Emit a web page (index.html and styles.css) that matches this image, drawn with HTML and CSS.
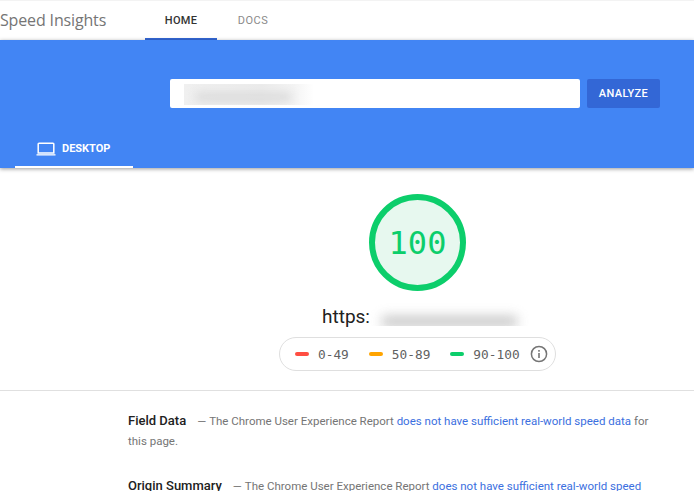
FILE: index.html
```html
<!DOCTYPE html>
<html lang="en">
<head>
  <meta charset="UTF-8" />
  <title>PageSpeed Insights</title>
  <link rel="stylesheet" href="styles.css">
</head>
<body>

<!-- Header -->
<header class="top-bar">
  <div class="brand">Speed Insights</div>
  <nav class="nav">
    <a class="nav-tab active">HOME</a>
    <a class="nav-tab">DOCS</a>
  </nav>
</header>

<!-- Search band -->
<section class="band">
  <div class="search-row">
    <div class="search-input">
      <div class="input-mask"><div class="smudge smudge-input"></div></div>
    </div>
    <button class="analyze">ANALYZE</button>
  </div>
  <div class="device-tabs">
    <div class="device-tab">
      <svg class="laptop" width="20" height="14" viewBox="0 0 20 14">
        <path d="M3 1.2h14a.8.8 0 0 1 .8.8v9H2.2V2a.8.8 0 0 1 .8-.8z" fill="none" stroke="#fff" stroke-width="1.5"/>
        <path d="M0.5 12.2h19v1.3H0.5z" fill="#fff"/>
      </svg>
      <span>DESKTOP</span>
    </div>
  </div>
</section>

<!-- Score -->
<section class="score">
  <div class="gauge">100</div>
  <div class="url">
    <span class="url-text">https:</span>
    <div class="url-mask"><div class="smudge smudge-url"></div></div>
  </div>
  <div class="legend">
    <span class="legend-item"><i class="dash red"></i>0-49</span>
    <span class="legend-item"><i class="dash orange"></i>50-89</span>
    <span class="legend-item"><i class="dash green"></i>90-100</span>
    <svg class="info" width="18" height="18" viewBox="0 0 18 18">
      <circle cx="9" cy="9" r="7.6" fill="none" stroke="#757575" stroke-width="1.5"/>
      <rect x="8.2" y="8" width="1.6" height="5" fill="#757575"/>
      <rect x="8.2" y="5" width="1.6" height="1.7" fill="#757575"/>
    </svg>
  </div>
</section>

<!-- Details -->
<section class="details">
  <p class="note"><b>Field Data</b><span class="sep">—</span>The Chrome User Experience Report <a>does not have sufficient real-world speed data</a> for this page.</p>
  <p class="note"><b>Origin Summary</b><span class="sep">—</span>The Chrome User Experience Report <a>does not have sufficient real-world speed</a></p>
</section>

</body>
</html>
```

FILE: styles.css
```css
html, body {
  height: 491px;
  overflow: hidden;
}

body {
  margin: 0;
  padding: 0;
  background: #fff;
  font-family: Roboto, "Liberation Sans", sans-serif;
}

.top-bar {
  display: flex;
  height: 39px;
  border-top: 1px solid #f3f3f3;
  background: #fff;
}

.brand {
  width: 145px;
  font-family: "Open Sans", Roboto, sans-serif;
  font-size: 16px;
  line-height: 39px;
  letter-spacing: -0.15px;
  color: #757575;
}

.nav {
  display: flex;
}

.nav-tab {
  width: 72px;
  height: 37px;
  line-height: 39px;
  text-align: center;
  font-size: 11px;
  letter-spacing: 0.45px;
  color: #8a8a8a;
}

.nav-tab.active {
  border-bottom: 2px solid #3367d6;
  font-weight: 500;
  letter-spacing: 0.3px;
  color: #333;
}

.band {
  height: 128px;
  background: #4285f4;
  box-shadow: 0 1px 4px rgba(0, 0, 0, 0.4);
  position: relative;
}

.search-row {
  display: flex;
  gap: 7px;
  padding: 39px 0 0 170px;
}

.search-input {
  width: 410px;
  height: 29px;
  padding: 5px 0 0 14px;
  box-sizing: border-box;
  background: #fff;
  border-radius: 2px;
}

.input-mask {
  width: 130px;
  height: 21px;
  background: linear-gradient(to right, #f0f0f0, #ececec 60%, #f4f4f4 85%, #fff);
  overflow: hidden;
}

.smudge {
  background: #bdbdbd;
}

.smudge-input {
  width: 95px;
  height: 8px;
  margin: 9px 0 0 12px;
  background: #d8d8d8;
  filter: blur(5px);
}

.analyze {
  width: 73px;
  height: 29px;
  padding: 0;
  border: none;
  border-radius: 2px;
  background: #3367d6;
  color: #fff;
  font-family: Roboto, sans-serif;
  font-size: 11px;
  font-weight: 500;
  letter-spacing: 0.4px;
}

.device-tabs {
  display: flex;
  padding: 20px 0 0 15px;
}

.device-tab {
  display: flex;
  align-items: center;
  gap: 6px;
  box-sizing: border-box;
  width: 118px;
  height: 40px;
  padding: 3px 0 0 21px;
  border-bottom: 2px solid #fff;
  color: #fff;
  font-size: 11px;
  font-weight: 700;
}

.score {
  display: flex;
  flex-direction: column;
  align-items: center;
  height: 222px;
  border-bottom: 1px solid #e0e0e0;
}

.gauge {
  box-sizing: border-box;
  width: 97px;
  height: 97px;
  margin: 26px 0 0 141px;
  border: 6px solid #0cce6b;
  border-radius: 50%;
  background: #e7f8ef;
  color: #0cce6b;
  font-family: "DejaVu Sans Mono", monospace;
  font-size: 32px;
  line-height: 87px;
  text-align: center;
}

.url {
  display: flex;
  width: 207px;
  height: 24px;
  margin: 11px 0 0 157px;
  font-size: 19px;
  color: #212121;
}

.url-text {
  width: 48px;
  line-height: 30px;
}

.url-mask {
  width: 159px;
  height: 24px;
  background: #fff;
  overflow: hidden;
}

.smudge-url {
  width: 135px;
  height: 11px;
  margin: 14px 0 0 12px;
  opacity: 0.85;
  filter: blur(6px);
}

.legend {
  display: flex;
  align-items: center;
  box-sizing: border-box;
  width: 277px;
  height: 34px;
  margin: 11px 0 0 140px;
  padding: 0 7px 0 15.5px;
  border: 1px solid #dfdfdf;
  border-radius: 17px;
  font-family: "DejaVu Sans Mono", monospace;
  font-size: 12.8px;
  white-space: nowrap;
  color: #616161;
}

.legend-item {
  display: flex;
  align-items: center;
  gap: 9px;
  margin-right: 20px;
}

.legend-item:nth-child(3) {
  margin-right: 0;
}

.dash {
  width: 14px;
  height: 4px;
  border-radius: 2px;
}

.red { background: #ff4e42; }
.orange { background: #ffa400; }
.green { background: #0cce6b; }

.info {
  margin-left: auto;
}

.details {
  padding: 20px 40px 0 128px;
}

.note {
  margin: 0 0 25px;
  font-size: 11.5px;
  line-height: 20px;
  color: #757575;
}

.note b {
  font-size: 13px;
  font-weight: 500;
  color: #212121;
}

.sep {
  margin: 0 3px 0 11px;
}

.note a {
  color: #3b6fe0;
}
```
